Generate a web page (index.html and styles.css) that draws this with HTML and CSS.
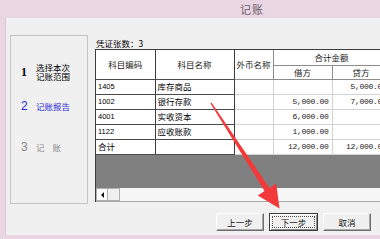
FILE: index.html
```html
<!DOCTYPE html>
<html lang="zh">
<head>
<meta charset="utf-8">
<link rel="stylesheet" href="styles.css">
</head>
<body>
<div class="window">
  <div class="titlebar"><span class="title">记账</span></div>
  <div class="client">
    <div class="content">
      <div class="steps">
        <div class="step step-done">
          <span class="num num-1">1</span>
          <span class="label label-2line"><span class="ln">选择本次</span><span class="ln">记账范围</span></span>
        </div>
        <div class="step step-current">
          <span class="num num-2">2</span>
          <span class="label">记账报告</span>
        </div>
        <div class="step step-next">
          <span class="num num-3">3</span>
          <span class="label label-wide">记 账</span>
        </div>
      </div>
      <div class="main">
        <div class="count">凭证张数：3</div>
        <div class="grid">
          <table class="report">
            <colgroup>
              <col class="c1"><col class="c2"><col class="c3"><col class="c4"><col class="c5">
            </colgroup>
            <thead>
              <tr class="h1">
                <th rowspan="2" class="dk">科目编码</th>
                <th rowspan="2" class="dk">科目名称</th>
                <th rowspan="2">外币名称</th>
                <th colspan="2">合计金额</th>
              </tr>
              <tr class="h2">
                <th>借方</th>
                <th>贷方</th>
              </tr>
            </thead>
            <tbody>
              <tr><td class="code dk">1405</td><td class="name dk">库存商品</td><td></td><td class="amt"></td><td class="amt">5,000.00</td></tr>
              <tr><td class="code dk">1002</td><td class="name dk">银行存款</td><td></td><td class="amt">5,000.00</td><td class="amt">7,000.00</td></tr>
              <tr><td class="code dk">4001</td><td class="name dk">实收资本</td><td></td><td class="amt">6,000.00</td><td class="amt"></td></tr>
              <tr><td class="code dk">1122</td><td class="name dk">应收账款</td><td></td><td class="amt">1,000.00</td><td class="amt"></td></tr>
              <tr><td class="name dk">合计</td><td class="name dk"></td><td></td><td class="amt">12,000.00</td><td class="amt">12,000.00</td></tr>
            </tbody>
          </table>
          <div class="dark"></div>
          <div class="hscroll">
            <span class="sbtn"><span class="tri"></span></span>
            <span class="sthumb"></span>
          </div>
        </div>
      </div>
    </div>
    <div class="buttons">
      <button class="btn">上一步</button>
      <button class="btn btn-focus"><span class="focus-ring">下一步</span></button>
      <button class="btn">取消</button>
    </div>
  </div>
  <svg class="arrow" width="380" height="239" viewBox="0 0 380 239">
    <polygon fill="#f23a3a" points="210.5,103.4 211.5,102.6 269.5,187.9 276.2,183.5 279.5,208.5 257.8,195.5 264.5,191.1"/>
  </svg>
</div>
</body>
</html>
```

FILE: styles.css
```css
* { box-sizing: border-box; }
html, body { margin: 0; padding: 0; }
body {
  width: 380px;
  height: 239px;
  overflow: hidden;
  background: #ead6e3;
  font-family: "Noto Sans CJK SC", "Liberation Sans", sans-serif;
  color: #000;
}
.window {
  position: relative;
  width: 380px;
  height: 239px;
  display: flex;
  flex-direction: column;
}
.titlebar {
  height: 18px;
  flex: none;
  padding-left: 240px;
  display: flex;
  align-items: center;
}
.title {
  font-size: 11px;
  line-height: 12px;
  color: #6e5e6c;
  letter-spacing: 1px;
}
.client {
  margin-left: 5px;
  height: 217px;
  flex: none;
  background: #f0f0f0;
  border-left: 1px solid #dcc8d4;
  display: flex;
  flex-direction: column;
}
.content {
  display: flex;
  gap: 7px;
  padding-top: 17px;
  padding-left: 4px;
}
.steps {
  width: 78px;
  height: 169px;
  flex: none;
  border: 1px solid #c4c4c4;
  background: #f0f0f0;
  padding-left: 10px;
  display: flex;
  flex-direction: column;
}
.step {
  display: flex;
  align-items: center;
}
.step-done { margin-top: 26px; height: 20px; }
.step-current { margin-top: 17px; height: 14px; }
.step-next { margin-top: 27px; height: 14px; }
.num {
  width: 15px;
  flex: none;
}
.num-1 {
  font-family: "Liberation Serif", serif;
  font-weight: bold;
  font-size: 12px;
}
.num-2 {
  font-family: "Liberation Sans", sans-serif;
  font-size: 12px;
  color: #2a2ad8;
}
.num-3 {
  font-family: "Liberation Sans", sans-serif;
  font-size: 12px;
  color: #8a8a8a;
}
.label {
  font-size: 8.5px;
  line-height: 10px;
  white-space: nowrap;
}
.label-2line {
  display: flex;
  flex-direction: column;
}
.ln {
  display: block;
  height: 9.5px;
  line-height: 9.5px;
}
.step-current .label { color: #2a2ad8; }
.step-next .label { color: #8a8a8a; letter-spacing: 3px; }
.main {
  flex: 1;
  min-width: 0;
  overflow: hidden;
}
.count {
  height: 14px;
  padding-top: 2px;
  padding-left: 1px;
  font-size: 8.5px;
  line-height: 12px;
}
.grid {
  width: 296px;
  height: 153px;
  border-left: 1px solid #3c3c3c;
  border-top: 1px solid #3c3c3c;
  display: flex;
  flex-direction: column;
}
.report {
  border-collapse: collapse;
  table-layout: fixed;
  width: 294px;
  background: #fff;
  font-size: 8.5px;
}
.c1 { width: 59px; }
.c2 { width: 79px; }
.c3 { width: 39px; }
.c4 { width: 59px; }
.c5 { width: 58px; }
.report th, .report td {
  padding: 0;
  border-right: 1px solid #d2d2d2;
  border-bottom: 1px solid #d2d2d2;
  white-space: nowrap;
  overflow: hidden;
}
.report th {
  font-weight: normal;
  color: #222;
  border-color: #8c8c8c;
  height: 14px;
  line-height: 12px;
}
.report .h1 th { height: 15px; }
.report th.dk, .report td.dk {
  border-right-color: #3c3c3c;
  border-bottom-color: #4a4a4a;
}
.report td { height: 15px; line-height: 13px; }
.code {
  font-family: "Liberation Sans", sans-serif;
  font-size: 7.5px;
  padding-left: 2px !important;
}
.name { padding-left: 2px !important; }
.amt {
  text-align: right;
  font-family: "Liberation Mono", monospace;
  font-size: 8px;
  letter-spacing: -0.3px;
  padding-right: 3px !important;
  color: #222;
}
.dark {
  flex: 1;
  background: #808080;
}
.hscroll {
  height: 14px;
  flex: none;
  background: #f7f7f7;
  border-bottom: 1px solid #a8a8a8;
  display: flex;
}
.sbtn {
  width: 12px;
  height: 13px;
  border: 1px solid #b0b0b0;
  background: #fbfbfb;
  display: flex;
  align-items: center;
  justify-content: center;
}
.tri {
  width: 0;
  height: 0;
  border-top: 3px solid transparent;
  border-bottom: 3px solid transparent;
  border-right: 3px solid #111;
}
.sthumb {
  width: 12px;
  height: 13px;
  border: 1px solid #b0b0b0;
  border-left: none;
  background: #f0f0f0;
}
.buttons {
  display: flex;
  justify-content: flex-end;
  gap: 5px;
  margin-top: 9px;
  padding-right: 9px;
}
.btn {
  width: 48px;
  height: 18px;
  padding: 0;
  margin: 0;
  font-family: "Noto Sans CJK SC", sans-serif;
  font-size: 8.5px;
  color: #111;
  background: #f0f0f0;
  border: 1px solid;
  border-color: #ffffff #6e6e6e #6e6e6e #ffffff;
  box-shadow: inset -1px -1px 0 #a8a8a8;
}
.btn-focus {
  width: 49px;
  border: 1px solid #3a3a3a;
  box-shadow: inset 1px 1px 0 #fff, inset -1px -1px 0 #8a8a8a;
  padding: 2px;
}
.focus-ring {
  display: block;
  height: 100%;
  border: 1px dotted #555;
  line-height: 11px;
}
.arrow {
  position: absolute;
  left: 0;
  top: 0;
  pointer-events: none;
}
```
